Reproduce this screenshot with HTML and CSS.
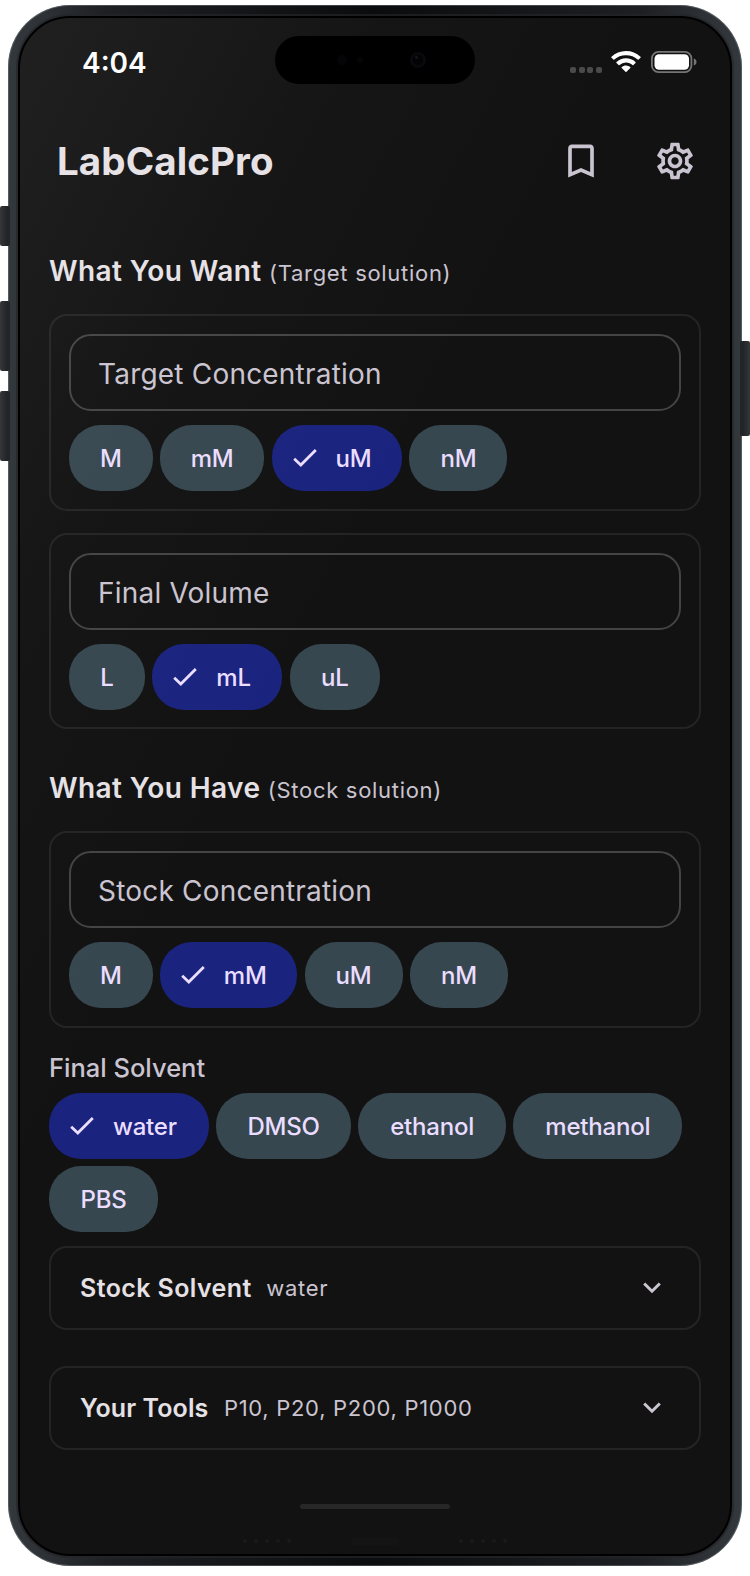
FILE: index.html
```html
<!DOCTYPE html>
<html lang="en">
<head>
    <meta charset="UTF-8">
    <meta name="viewport" content="width=device-width, initial-scale=1.0">
    <title>LabCalcPro</title>
    <link rel="stylesheet" href="styles.css">
</head>
<body>
    <div class="phone">
        <!-- Side buttons -->
        <span class="side-button action"></span>
        <span class="side-button volume-up"></span>
        <span class="side-button volume-down"></span>
        <span class="side-button power"></span>

        <div class="screen">
            <div class="island">
                <span class="sensor"></span>
                <span class="sensor small"></span>
                <span class="camera"></span>
            </div>

            <div class="status-bar">
                <span class="time">4:04</span>
                <div class="status-icons">
                    <div class="signal"><i></i><i></i><i></i><i></i></div>
                    <svg class="wifi" width="30" height="22" viewBox="0 0 30 22">
                        <path d="M15 0C9.4 0 4.3 2.2.5 5.8a.6.6 0 0 0 0 .9l1.9 1.9c.3.3.6.3.9 0A17 17 0 0 1 15 4.2a17 17 0 0 1 11.7 4.4c.3.3.6.3.9 0l1.9-1.9a.6.6 0 0 0 0-.9A21 21 0 0 0 15 0z"/>
                        <path d="M15 7.3c-3.7 0-7 1.4-9.5 3.7a.6.6 0 0 0 0 .9l2.1 2c.3.3.6.3.9 0A9.6 9.6 0 0 1 15 11.4c2.5 0 4.8.9 6.5 2.5.3.3.6.3.9 0l2.1-2a.6.6 0 0 0 0-.9A14 14 0 0 0 15 7.3z"/>
                        <path d="M15 14.4c-1.7 0-3.2.6-4.3 1.6-.3.3-.3.6 0 .9l3.8 3.8c.3.3.7.3 1 0l3.8-3.8c.3-.3.3-.6 0-.9a6.4 6.4 0 0 0-4.3-1.6z"/>
                    </svg>
                    <svg class="battery" width="46" height="22" viewBox="0 0 46 22">
                        <rect class="shell" x="0.9" y="0.9" width="39.5" height="20.2" rx="6.5"/>
                        <rect x="3.5" y="3.3" width="34.5" height="15.4" rx="4.5"/>
                        <path class="cap" d="M42.8 7.5v7c1.7-.6 2.7-1.9 2.7-3.5s-1-2.9-2.7-3.5z"/>
                    </svg>
                </div>
            </div>

            <div class="app-bar">
                <h1>LabCalcPro</h1>
                <div class="actions">
                    <svg width="44" height="44" viewBox="0 0 24 24">
                        <path d="M17 3H7c-1.1 0-2 .9-2 2v16l7-3 7 3V5c0-1.1-.9-2-2-2zm0 15-5-2.18L7 18V5h10v13z"/>
                    </svg>
                    <svg width="44" height="44" viewBox="0 0 24 24">
                        <path d="M19.43 12.98c.04-.32.07-.64.07-.98s-.03-.66-.07-.98l2.11-1.65c.19-.15.24-.42.12-.64l-2-3.46c-.09-.16-.26-.25-.44-.25-.06 0-.12.01-.17.03l-2.49 1c-.52-.4-1.08-.73-1.69-.98l-.38-2.65C14.46 2.18 14.25 2 14 2h-4c-.25 0-.46.18-.49.42l-.38 2.65c-.61.25-1.17.59-1.69.98l-2.49-1c-.06-.02-.12-.03-.18-.03-.17 0-.34.09-.43.25l-2 3.46c-.13.22-.07.49.12.64l2.11 1.65c-.04.32-.07.65-.07.98s.03.66.07.98l-2.11 1.65c-.19.15-.24.42-.12.64l2 3.46c.09.16.26.25.44.25.06 0 .12-.01.17-.03l2.49-1c.52.4 1.08.73 1.69.98l.38 2.65c.03.24.24.42.49.42h4c.25 0 .46-.18.49-.42l.38-2.65c.61-.25 1.17-.59 1.69-.98l2.49 1c.06.02.12.03.18.03.17 0 .34-.09.43-.25l2-3.46c.12-.22.07-.49-.12-.64l-2.11-1.65zm-1.98-1.71c.04.31.05.52.05.73 0 .21-.02.43-.05.73l-.14 1.13.89.7 1.08.84-.7 1.21-1.27-.51-1.04-.42-.9.68c-.43.32-.84.56-1.25.73l-1.06.43-.16 1.13-.2 1.35h-1.4l-.19-1.35-.16-1.13-1.06-.43c-.43-.18-.83-.41-1.23-.71l-.91-.7-1.06.43-1.27.51-.7-1.21 1.08-.84.89-.7-.14-1.13c-.03-.31-.05-.54-.05-.74s.02-.43.05-.73l.14-1.13-.89-.7-1.08-.84.7-1.21 1.27.51 1.04.42.9-.68c.43-.32.84-.56 1.25-.73l1.06-.43.16-1.13.2-1.35h1.39l.19 1.35.16 1.13 1.06.43c.43.18.83.41 1.23.71l.91.7 1.06-.43 1.27-.51.7 1.21-1.07.85-.89.7.14 1.13zM12 8c-2.21 0-4 1.79-4 4s1.79 4 4 4 4-1.79 4-4-1.79-4-4-4zm0 6c-1.1 0-2-.9-2-2s.9-2 2-2 2 .9 2 2-.9 2-2 2z"/>
                    </svg>
                </div>
            </div>

            <main class="content">
                <!-- Target solution -->
                <h2 class="want">What You Want <small>(Target solution)</small></h2>
                <section class="card">
                    <div class="field">Target Concentration</div>
                    <div class="chips">
                        <span class="chip chip-m">M</span>
                        <span class="chip chip-mm">mM</span>
                        <span class="chip chip-um selected"><svg class="check" width="24" height="20" viewBox="0 0 24 20"><path d="M1.2 10.8 7.8 17 22.8 2"/></svg>uM</span>
                        <span class="chip chip-nm">nM</span>
                    </div>
                </section>
                <section class="card volume">
                    <div class="field">Final Volume</div>
                    <div class="chips">
                        <span class="chip chip-l">L</span>
                        <span class="chip chip-ml selected"><svg class="check" width="24" height="20" viewBox="0 0 24 20"><path d="M1.2 10.8 7.8 17 22.8 2"/></svg>mL</span>
                        <span class="chip chip-ul">uL</span>
                    </div>
                </section>

                <!-- Stock solution -->
                <h2 class="have">What You Have <small>(Stock solution)</small></h2>
                <section class="card">
                    <div class="field">Stock Concentration</div>
                    <div class="chips">
                        <span class="chip chip-m">M</span>
                        <span class="chip chip-mm selected"><svg class="check" width="24" height="20" viewBox="0 0 24 20"><path d="M1.2 10.8 7.8 17 22.8 2"/></svg>mM</span>
                        <span class="chip chip-um">uM</span>
                        <span class="chip chip-nm">nM</span>
                    </div>
                </section>

                <h3>Final Solvent</h3>
                <div class="chips solvents">
                    <span class="chip chip-water selected"><svg class="check" width="24" height="20" viewBox="0 0 24 20"><path d="M1.2 10.8 7.8 17 22.8 2"/></svg>water</span>
                    <span class="chip chip-dmso">DMSO</span>
                    <span class="chip chip-ethanol">ethanol</span>
                    <span class="chip chip-methanol">methanol</span>
                    <span class="chip chip-pbs">PBS</span>
                </div>

                <div class="expander">
                    <strong class="solvent-title">Stock Solvent</strong>
                    <span>water</span>
                    <svg class="chevron" width="18" height="12" viewBox="0 0 18 12"><path d="M1.2 1.5 9 9.2l7.8-7.7"/></svg>
                </div>
                <div class="expander">
                    <strong>Your Tools</strong>
                    <span>P10, P20, P200, P1000</span>
                    <svg class="chevron" width="18" height="12" viewBox="0 0 18 12"><path d="M1.2 1.5 9 9.2l7.8-7.7"/></svg>
                </div>
            </main>

            <div class="home-bar"></div>
            <div class="bottom-edge">
                <div class="holes"><i></i><i></i><i></i><i></i><i></i></div>
                <div class="port"></div>
                <div class="holes"><i></i><i></i><i></i><i></i><i></i></div>
            </div>
        </div>
    </div>
</body>
</html>
```

FILE: styles.css
```css
* {
    box-sizing: border-box;
}
body {
    margin: 0;
    padding: 5px 8px 10px;
    background-color: #ffffff;
    font-family: Inter, "Liberation Sans", sans-serif;
    color: #e6e1e5;
    overflow: hidden;
}
h1, h2, h3 {
    margin: 0;
    white-space: nowrap;
}

/* Phone frame */
.phone {
    position: relative;
    width: 734px;
    height: 1561px;
    padding: 11px 10px 10px;
    border-radius: 62px;
    background: linear-gradient(90deg, #33383c 0, #2e3236 35px, #1d1f22 100px, #0b0c0e 50%, #1d1f22 634px, #2e3236 699px, #33383c 100%);
    box-shadow: inset 0 0 0 1px rgba(150, 160, 165, 0.35);
}
.screen {
    position: relative;
    display: flex;
    flex-direction: column;
    height: 1540px;
    border: 2px solid #000000;
    border-radius: 52px;
    background-color: #121212;
    box-shadow: 0 0 0 2px rgba(35, 37, 41, 0.7);
    overflow: hidden;
}
/* glare in the top left corner */
.screen::after {
    content: "";
    position: absolute;
    inset: 0;
    background: linear-gradient(118deg, rgba(255, 255, 255, 0.055) 3%, rgba(255, 255, 255, 0.015) 22%, transparent 42%);
    pointer-events: none;
}
.side-button {
    position: absolute;
    left: -8px;
    width: 10px;
    border-radius: 2px;
    background: linear-gradient(90deg, #34383b, #222427 70%);
}
.action {
    top: 201px;
    height: 40px;
}
.volume-up {
    top: 296px;
    height: 70px;
}
.volume-down {
    top: 386px;
    height: 70px;
}
.power {
    left: 732px;
    top: 336px;
    height: 95px;
    background: linear-gradient(90deg, #222427 30%, #34383b);
}
.island {
    position: absolute;
    top: 18px;
    left: 255px;
    width: 200px;
    height: 48px;
    border-radius: 24px;
    background-color: #000000;
    z-index: 1;
}
.sensor {
    position: absolute;
    left: 62px;
    top: 19px;
    width: 10px;
    height: 10px;
    border-radius: 50%;
    background-color: #050507;
}
.sensor.small {
    left: 82px;
    top: 21px;
    width: 6px;
    height: 6px;
}
.camera {
    position: absolute;
    left: 135px;
    top: 16px;
    width: 16px;
    height: 16px;
    border: 3px solid #09090d;
    border-radius: 50%;
    background: radial-gradient(circle at 35% 25%, #141418 1px, #030304 2px);
}

/* Status bar */
.status-bar {
    display: flex;
    justify-content: space-between;
    height: 66px;
    padding: 28px 33px 0 62px;
}
.time {
    font-size: 28px;
    font-weight: 600;
    line-height: 34px;
    color: #ffffff;
}
.status-icons {
    display: flex;
    padding-top: 5px;
}
.status-icons svg {
    fill: #ffffff;
}
.signal {
    display: flex;
    gap: 2.6px;
    padding: 16px 9px 0 0;
}
.signal i {
    width: 6px;
    height: 6px;
    border-radius: 2px;
    background-color: #4a4a4a;
}
.wifi {
    margin-right: 10px;
}
.battery .shell {
    fill: none;
    stroke: #757575;
    stroke-width: 1.8;
}
.battery .cap {
    fill: #757575;
}

/* App bar */
.app-bar {
    display: flex;
    align-items: center;
    justify-content: space-between;
    height: 118px;
    padding: 36px 33px 0 37px;
}
h1 {
    font-size: 38.5px;
    font-weight: 700;
    letter-spacing: 0.1px;
}
.actions {
    display: flex;
    gap: 50px;
    fill: #cac4d0;
}

/* Calculator form */
.content {
    display: flex;
    flex-direction: column;
    padding: 0 29px;
}
h2 {
    height: 112px;
    padding-top: 52px;
    font-size: 28px;
    font-weight: 600;
    line-height: 34px;
    letter-spacing: 0.4px;
}
.have {
    height: 102px;
    padding-top: 42px;
}
h2 small {
    font-size: 22px;
    font-weight: 400;
    letter-spacing: 0.7px;
    color: #cac4d0;
}
.card {
    height: 197px;
    padding: 18px;
    border: 2px solid #242424;
    border-radius: 18px;
}
.card.volume {
    height: 196px;
    margin-top: 22px;
}
.field {
    height: 77px;
    padding-left: 27px;
    border: 2px solid #444444;
    border-radius: 22px;
    font-size: 28px;
    line-height: 76px;
    letter-spacing: 0.2px;
    color: #cac4d0;
}
.chips {
    display: flex;
    flex-wrap: wrap;
    gap: 7.3px;
    margin-top: 14px;
}
.chip {
    display: flex;
    align-items: center;
    justify-content: center;
    height: 66px;
    border-radius: 32px;
    background-color: #37474f;
    color: #eaddff;
    font-size: 24px;
    font-weight: 500;
    letter-spacing: -0.2px;
    white-space: nowrap;
}
.chip.selected {
    justify-content: flex-start;
    padding-left: 21px;
    background-color: #1a237e;
}
.check {
    margin-right: 19px;
    fill: none;
    stroke: #eaddff;
    stroke-width: 2.8;
}
.chip-m { width: 83.5px; }
.chip-mm { width: 104.5px; }
.chip-mm.selected { width: 137.5px; }
.chip-um, .chip-nm { width: 98px; }
.chip-um.selected { width: 130.5px; }
.chip-l { width: 76px; }
.chip-ml { width: 130px; }
.chip-ul { width: 90.5px; }
.chip-water { width: 160px; }
.chip-dmso { width: 134.5px; }
.chip-ethanol { width: 148px; }
.chip-methanol { width: 169px; }
.chip-pbs { width: 109px; }
h3 {
    height: 50px;
    margin-top: 22px;
    font-size: 25.5px;
    font-weight: 500;
    line-height: 35px;
    color: #cac4d0;
}
.solvents {
    margin: -7px 0 14px;
}
.expander {
    display: flex;
    align-items: center;
    height: 84px;
    margin-bottom: 36px;
    padding: 0 38px 0 29px;
    border: 2px solid #242424;
    border-radius: 18px;
}
.expander strong {
    margin-right: 15.5px;
    font-size: 25px;
    font-weight: 600;
    letter-spacing: 0.1px;
}
.expander .solvent-title {
    margin-right: 14.5px;
    letter-spacing: 0.4px;
}
.expander span {
    font-size: 22px;
    letter-spacing: 0.7px;
    color: #cac4d0;
}
.chevron {
    margin-left: auto;
    fill: none;
    stroke: #cac4d0;
    stroke-width: 3;
}

/* Bottom of the phone */
.home-bar {
    width: 150px;
    height: 5px;
    margin: 18px auto 0;
    border-radius: 3px;
    background-color: #272727;
}
.bottom-edge {
    display: flex;
    align-items: center;
    justify-content: center;
    gap: 61px;
    margin-top: 28px;
}
.holes {
    display: flex;
    gap: 7px;
}
.holes i {
    width: 4px;
    height: 4px;
    border-radius: 50%;
    background-color: #1a1a1a;
}
.port {
    width: 46px;
    height: 8px;
    background-color: #141414;
}
```
